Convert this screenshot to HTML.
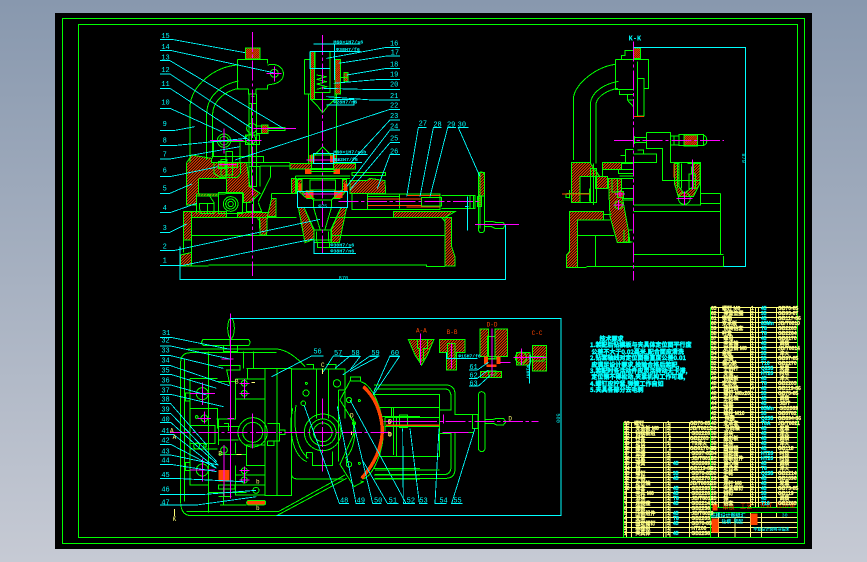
<!DOCTYPE html>
<html lang="zh"><head><meta charset="utf-8"><title>CAD</title>
<style>
html,body{margin:0;padding:0;width:867px;height:562px;overflow:hidden;background:linear-gradient(#8898ae,#c6cad4)}
svg{position:absolute;left:0;top:0}
svg *{shape-rendering:crispEdges}
.g,.g *{fill:none;stroke:#0f0;stroke-width:3}
.c,.c *{fill:none;stroke:#0ff;stroke-width:2.6}
.m,.m *{fill:none;stroke:#f0f;stroke-width:3;stroke-dasharray:60 8 10 8}
.ms,.ms *{fill:none;stroke:#f0f;stroke-width:3}
.r,.r *{fill:none;stroke:#f40;stroke-width:3}
.o,.o *{fill:#f40;stroke:none}
.h,.h *{fill:url(#hatch);stroke:#0f0;stroke-width:3}
.hd,.hd *{fill:url(#dense);stroke:#0f0;stroke-width:3}
.y,.y *{fill:none;stroke:#ff7;stroke-width:1}
text{font-family:"Liberation Mono","Noto Sans CJK SC",monospace;shape-rendering:auto}
.t{fill:#0ff;font-size:21px}
.ty{fill:#ff7;font-size:18px}
.to{fill:#f40;font-size:18px}
.col{position:absolute;font:bold 5px/5px "Liberation Sans","Noto Sans CJK SC",sans-serif;color:#ff8;white-space:pre;-webkit-text-stroke:.25px #ff8}
.cy{color:#0ff;-webkit-text-stroke:.25px #0ff}
.note{position:absolute;left:590px;top:336px;width:106px;font:bold 6px/6.4px "Noto Sans CJK SC",sans-serif;color:#0ff;-webkit-text-stroke:.45px #0ff;white-space:pre}
</style></head><body>
<svg width="867" height="562" viewBox="0 0 867 562" xmlns="http://www.w3.org/2000/svg">
<defs>
<pattern id="hatch" width="6" height="6" patternUnits="userSpaceOnUse" patternTransform="rotate(45)"><rect width="6" height="6" fill="#000"/><rect width="3" height="6" fill="#f40"/></pattern>
<pattern id="dense" width="4" height="4" patternUnits="userSpaceOnUse" patternTransform="rotate(45)"><rect width="4" height="4" fill="#200"/><rect width="3" height="4" fill="#f40"/></pattern>
</defs>
<rect x="55" y="13" width="757" height="536" fill="#000"/>
<rect x="62.5" y="18.5" width="742" height="525" fill="none" stroke="#0f0" stroke-width="1"/>
<rect x="78.5" y="24.5" width="719" height="513" fill="none" stroke="#0f0" stroke-width="1"/>

<!-- FRONT VIEW -->
<g transform="translate(150,20) scale(.33333)">
<g class="h">
<path d="M110,428 L125,405 L185,415 V428 H290 L300,500 L330,520 L300,548 H280 V520 H205 V528 H140 V555 H110Z"/>
<path d="M100,575 H145 L125,592 V660 H100Z"/>
<path d="M92,705 L125,697 V738 H92Z"/>
<path d="M125,575 H230 V592 H125Z M262,578 H355 V592 H262Z"/>
<path d="M328,592 H352 L350,645 H330Z"/>
<path d="M365,535 H378 V590 H352Z"/>
<path d="M420,430 H484 V447 H420Z M550,430 H617 V447 H550Z"/>
<path d="M445,562 H462 L492,628 V658 L465,668 Z"/>
<path d="M590,562 H573 L543,628 V668 H568Z"/>
<path d="M600,482 H650 L660,475 L705,482 L707,520 H600Z"/>
<path d="M425,475 H440 V520 H425Z"/>
<path d="M730,575 H915 L885,592 H730Z"/>
<path d="M885,592 H905 V680 L915,710 V738 H885Z"/>
<path d="M192,440 V460 L210,472 H262 L272,460 V428 H192Z"/>
<path d="M442,478 H456 V515 L490,535 H470 L442,510Z M590,478 H578 V515 L550,535 H570 L590,510Z"/>
</g>
<rect x="145" y="475" width="85" height="47" fill="#000" stroke="#0f0" stroke-width="3" rx="6"/>
<g class="hd"><path d="M286,84 H330 V117 H286Z"/><path d="M334,315 H354 V340 H334Z"/><path d="M582,157 H594 V185 H582Z"/><path d="M492,95 H495 V145 H492Z"/><path d="M555,118 H572 V222 H555Z"/><path d="M482,95 H494 V238 H482Z"/><path d="M206,428 H262 V442 H206Z"/><path d="M985,458 H1003 V528 H985Z" style="fill:url(#hatch)"/><path d="M982,530 H994 V560 H982Z"/></g>
<g class="o"><rect x="478" y="405" width="16" height="22"/><rect x="540" y="405" width="16" height="22"/><rect x="465" y="447" width="20" height="15"/><rect x="550" y="447" width="20" height="15"/><rect x="466" y="512" width="25" height="22"/><rect x="552" y="512" width="25" height="22"/><rect x="445" y="490" width="10" height="25"/><rect x="582" y="490" width="10" height="25"/></g>

<g class="g">
<path d="M120,428 V260 C122,200 190,140 262,135"/>
<path d="M170,420 V280 C172,230 210,195 265,183"/>
<path d="M188,415 V280 C190,245 220,215 265,205"/>
<path d="M262,118 H352 V130 M262,118 V207 H296 M318,207 H352 V195"/>
<path d="M352,135 C385,128 402,145 400,165 C398,185 380,192 352,195"/>
<circle cx="373" cy="160" r="12"/>
<path d="M296,207 V222 H318 V207 M297,222 V500 H320 V222 M304,230 H314 M296,250 H320 M304,250 V500"/>
<circle cx="305" cy="325" r="15"/><circle cx="302" cy="358" r="15"/><rect x="286" y="345" width="43" height="28"/>
<path d="M354,322 H405 V332 H354 M318,318 H334 V340 H318"/>
<circle cx="222" cy="362" r="20"/><circle cx="222" cy="362" r="13"/>
<path d="M190,362 V410 M270,368 V428 M185,365 H290 M185,410 H270"/>
<rect x="228" y="395" width="20" height="70"/><rect x="213" y="418" width="18" height="50"/><path d="M205,425 H225 V445 H205Z"/>
<path d="M270,410 H340 V428 M270,428 H420 M330,438 H420 M330,438 L362,438 V470 L325,545 M297,440 H330 V500"/>
<rect x="206" y="518" width="71" height="62"/><circle cx="242" cy="552" r="22"/><circle cx="242" cy="552" r="15"/><circle cx="242" cy="552" r="8"/>
<path d="M140,520 V580 M142,522 H175 L192,548 V580 H150 L148,550 H190 M172,550 V580"/>
<path d="M290,575 V548 L305,545 M325,548 L335,575 H288 M310,530 V575"/>
<path d="M125,592 H320 L330,603 V645 M125,646 H460 M100,660 H125 M100,660 V697 M125,660 V697"/>
<path d="M355,592 H440 M365,520 H425 M365,520 V535 M125,738 H175 M175,735 H830 V740 H885"/>
<path d="M540,592 H875 L885,605 M545,646 H885"/>
<!-- center spindle -->
<path d="M463,118 V222 H482 V238 L500,255 L518,278 L536,255 L555,238 V222 H572 M463,118 H482 M490,145 H540 V218 H493 V145 M493,95 H540 V145 M480,238 H555"/>
<path d="M500,165 L530,170 L500,178 L530,185 L500,192 L530,200 L500,208"/>
<path d="M475,222 V430 M560,222 V430 M572,172 H595"/>
<path d="M492,407 L518,380 L545,407 M484,405 H550 V445 H484Z M484,430 H550"/>
<path d="M436,468 H600 M480,448 H556 M480,455 H556 M436,468 V520 M606,458 H707 V466 H606Z"/>
<path d="M442,475 H600 M480,480 H556 V510 H480Z M470,510 L490,540 H545 L575,510"/>
<path d="M462,562 L490,628 M573,562 L545,628 M490,540 V560 L510,628 M545,540 V560 L525,628 M470,562 H570"/>
<path d="M492,630 H544 V668 H492Z M500,635 V665 M535,635 V665"/>
<path d="M492,660 H545 M502,665 V683 H538 V665"/>
<rect x="606" y="520" width="46" height="48"/>
<path d="M652,522 H870 V568 H652 M652,530 H750 M748,523 V565 M815,533 H875 V558 H815Z M875,526 H975 V565 H875 M960,526 V565 M970,526 V565"/>
<path d="M985,475 Q985,456 994,456 Q1004,456 1004,475 V625 Q1004,638 994,638 Q985,638 985,625Z M990,460 V625"/>
<path d="M1004,605 H1030 L1040,608 H1060 L1065,615 L1060,625 H1035 L1025,620 H1004"/>
</g>
<g class="r"><path d="M652,537 H815 M652,557 H815 M770,527 H870 M770,561 H870"/></g>
<g class="m"><path d="M307,36 V768"/><path d="M517,45 V700"/><path d="M565,545 H985"/></g>
<g class="ms"><path d="M350,160 H395 M373,140 V185 M310,325 H438 M290,362 H335 M180,362 H280 M222,325 V400 M470,420 H570 M460,522 H575 M975,613 H1107 M205,433 H260"/></g>
<g class="c">
<path d="M30,58 H65 L285,98 M30,92 H65 L370,158 M30,122 H60 L400,325 M30,162 H60 L305,325 M30,205 H60 L300,362 M30,265 H60 L215,335 M30,332 H70 L135,320 M30,377 H70 L290,355 M30,417 H60 L270,380 M30,470 H60 L205,440 M30,520 H60 L125,492 M30,578 H60 L140,550 M30,637 H60 L110,612 M30,692 H70 L510,598 M30,737 H95 L490,657"/>
<path d="M750,82 H710 L530,115 M750,108 H710 L565,130 M750,145 H710 L590,165 M750,178 H690 L550,190 M750,208 H640 L520,205 M750,240 H665 L530,230 M750,268 H720 L255,420 M750,300 H720 L600,430 M750,330 H720 L590,500 M750,368 H720 L600,510 M750,404 H720 L682,505"/>
<path d="M830,323 H805 L770,530 M875,323 H850 L810,530 M918,323 H893 L840,530 M955,323 H925 L990,470"/>
<path d="M490,72 H553 V180 M480,95 H553 M480,95 V145 H540 M548,72 H632 M553,95 H632 M540,238 H612 V255 H530 M490,400 H550 V430 H490Z M550,403 H652 M550,428 H636"/>
<path d="M442,515 H592 V563 H442Z M492,660 V700 H618 M540,683 H605 M953,530 V632 M945,560 H955"/>
<path d="M90,680 V778 H1066 V615"/>
</g>
<g class="t">
<text x="34" y="54">15</text><text x="34" y="87">14</text><text x="34" y="118">13</text><text x="34" y="156">12</text><text x="34" y="198">11</text><text x="34" y="254">10</text><text x="38" y="318">9</text><text x="38" y="368">8</text><text x="38" y="410">7</text><text x="38" y="458">6</text><text x="38" y="512">5</text><text x="38" y="570">4</text><text x="38" y="630">3</text><text x="38" y="685">2</text><text x="38" y="728">1</text>
<text x="720" y="77">16</text><text x="722" y="103">17</text><text x="720" y="140">18</text><text x="720" y="170">19</text><text x="720" y="200">20</text><text x="720" y="234">21</text><text x="720" y="263">22</text><text x="720" y="294">23</text><text x="720" y="325">24</text><text x="720" y="362">25</text><text x="720" y="400">26</text>
<text x="806" y="317">27</text><text x="850" y="320">28</text><text x="891" y="320">29</text><text x="923" y="320">30</text>
<text x="566" y="778" font-size="16">870</text><text x="505" y="562" font-size="15">Φ75</text>
<text x="550" y="70" font-size="15" font-weight="bold">M60×1H7/s6</text><text x="558" y="93" font-size="15" font-weight="bold">Φ38H7/f6</text><text x="550" y="250" font-size="15" font-weight="bold">Φ28H7/n6</text>
<text x="550" y="400" font-size="15" font-weight="bold">M60×1H7/s6b</text><text x="552" y="423" font-size="15" font-weight="bold">Φ32H7/f6</text>
<text x="541" y="680" font-size="15" font-weight="bold">Φ30H7/s6</text><text x="541" y="697" font-size="15" font-weight="bold">Φ38H7/n6</text>
</g>
</g>

<!-- SIDE VIEW -->
<g transform="translate(530,20) scale(.33333)">
<g class="h">
<path d="M125,428 H180 L210,470 H150 V548 H125Z"/>
<path d="M118,575 H220 V600 H142 V742 H110 V705 L118,695Z"/>
<path d="M217,428 H275 V448 H217Z"/>
<path d="M197,470 H232 V505 H197Z"/>
<path d="M235,476 H275 V520 L295,630 L300,668 H262 L240,590Z"/>
<path d="M433,430 H447 V500 L462,520 L490,500 V430 H510 V490 L490,530 H445 L433,490Z"/>
</g>
<g class="hd"><path d="M310,84 H332 V116 H310Z"/><path d="M462,345 H502 V378 H462Z"/><path d="M262,515 H280 V532 H262Z"/></g>
<g class="g">
<path d="M130,420 V235 C135,190 200,140 256,133 M182,430 V245 C190,210 230,190 266,184 M198,430 V250 C205,225 235,210 264,205"/>
<path d="M256,118 V208 H310 M256,118 H355 V205 H342 M322,125 V288 H342 V175 H322 M268,212 V224 H310 M274,118 V106 H285 V92 H310 M292,224 V240 H310 M292,240 L310,260"/>
<path d="M313,348 V372 M313,352 H349 M313,368 H349 M349,337 H422 V427 H512 V555 H310 M349,337 V385 H397 V482 H512 M422,348 H447 M422,375 H447 M447,343 H520 V377 H447Z M432,348 V375 M520,345 Q532,350 530,361 Q532,372 520,377"/>
<path d="M286,388 H310 M286,388 V428 H380 V402 H310 M322,390 H340 V402 M272,407 H286 V428 M270,428 H310"/>
<path d="M118,575 V695 M142,646 H252 M196,646 V740 M110,742 H170 M170,739 H580 V708 M310,703 H580 M572,520 V703 M512,520 H572 M512,550 H572 M310,574 H572 M142,600 H240"/>
<rect x="182" y="445" width="18" height="103"/><path d="M178,505 V545 M190,430 V555 M150,470 V548 H180"/>
<path d="M217,428 V470 M265,448 V460 H310 M275,430 H310 M275,448 H310 M268,468 H310 M268,475 H310 M275,505 H310 M278,535 H310 M278,540 H310 M246,476 V516 H262 V476 M295,630 H308 M282,630 V666 H308 M295,630 V666 M222,583 H245"/>
<path d="M443,430 V505 M455,430 V505 M472,430 H507 M477,462 H497 V505 H477Z M485,440 V462"/>
<circle cx="463" cy="535" r="18"/><circle cx="266" cy="555" r="12"/>
<path d="M110,520 H180 M118,510 V536 M108,520 V532 H120"/>
</g>
<g class="r"><path d="M96,522 H180 M312,290 H342 M432,430 V472"/></g>
<g class="m"><path d="M310,65 V782"/><path d="M252,361 H582"/></g>
<g class="ms"><path d="M440,535 H487 M463,515 V555 M487,418 V510 M250,555 H282 M266,540 V570 M255,522 H285 M270,512 V532"/></g>
<g class="c"><path d="M310,82 H646 V739 H580"/></g>
<text class="t" x="296" y="62" font-weight="bold">K-K</text>
<g class="t"><text transform="translate(636,400) rotate(90)" font-size="16">870</text></g>
</g>

<!-- PLAN VIEW -->
<g transform="translate(150,305) scale(.33333)">
<g class="g">
<ellipse cx="243" cy="70" rx="10" ry="30"/>
<path d="M240,100 V123 M160,103 H295 Q305,112 295,122 H160 Q150,112 160,103Z M220,122 V140 H262 V122"/>
<path d="M380,143 H122 Q92,143 92,172 V590 Q92,632 125,632 H380 L590,520 M112,132 H380 Q420,135 465,185 M104,160 V590 M110,620 H385 L585,510"/>
<path d="M175,140 V622 M280,140 V190 M310,140 V190 M120,220 V540 H175 M120,220 H202 M120,310 H202 V370 M120,432 H202 M120,362 H195 V415 H120"/>
<path d="M256,222 H345 M256,222 V282 H345 M290,190 H345 M345,190 V572 H425 V190 H345 M381,190 V572"/>
<path d="M292,192 V222 M200,230 H256 V342 H200 M205,365 H266 M205,405 H266 M205,342 V420 M256,412 V445 M205,448 H290 V482 H345 M256,482 V570 H345 M256,540 H345 M256,510 H345 M290,448 V420 H345"/>
<circle cx="308" cy="382" r="30"/><circle cx="308" cy="382" r="44"/>
<path d="M352,355 H388 V408 H352 M388,375 H405 V388 H388 M352,408 V422 H372 V408"/>
<circle cx="157" cy="266" r="18"/><circle cx="157" cy="495" r="18"/><circle cx="163" cy="340" r="10"/><circle cx="140" cy="423" r="9"/><circle cx="165" cy="423" r="4"/><circle cx="140" cy="336" r="4"/>
<circle cx="283" cy="235" r="9"/><circle cx="283" cy="265" r="9"/><circle cx="283" cy="497" r="9"/><circle cx="283" cy="525" r="9"/><circle cx="318" cy="556" r="9"/><circle cx="222" cy="435" r="10"/>
<path d="M106,264 H120 V288 H106Z M106,472 H120 V496 H106Z M205,182 H270 V195 H230 L240,240 M222,355 H235 V378"/>
<path d="M205,540 H255 V552 H205Z M205,575 H245 M210,600 H290 M175,562 H290 M220,545 V600"/>
<!-- right body -->
<path d="M425,192 H585 V340 M500,192 V340 M535,192 V340 M470,178 H490 V192 M530,178 H558 V192"/>
<circle cx="518" cy="382" r="55"/><circle cx="518" cy="382" r="40"/><circle cx="518" cy="382" r="28"/>
<path d="M428,310 C415,370 425,450 470,470 M610,340 C622,385 610,440 585,460 M438,300 C430,350 435,430 475,460 M487,442 V482 H548 V440 M487,442 H470 V460 M425,490 V512 Q428,522 445,522 H580"/>
<circle cx="468" cy="264" r="9"/><circle cx="460" cy="295" r="7"/><circle cx="561" cy="235" r="11"/><circle cx="469" cy="235" r="3"/>
<path d="M570,285 L600,228 H632 V216 H602 V228 M570,285 L610,350 V390 L570,478 L612,545 L640,530 L632,528 M632,230 C670,240 700,320 700,380 C700,440 670,510 640,522"/>
<path d="M565,255 V470 M585,255 H565 M590,475 V460"/>
<circle cx="597" cy="285" r="8"/><circle cx="612" cy="355" r="5"/><circle cx="597" cy="478" r="8"/><circle cx="628" cy="287" r="3"/><circle cx="628" cy="475" r="3"/>
<path d="M672,240 H810 M672,252 H810 M672,268 H810 M690,308 H810 M690,335 H810 M690,425 V455 M690,455 H810 M672,490 H810 M672,510 H810 M672,522 H810 M730,308 V450 M740,335 V450"/>
<rect x="748" y="330" width="25" height="38"/>
</g>
<path d="M640,245 Q690,290 697,370 Q697,450 635,520" fill="none" stroke="#f40" stroke-width="10"/>
<rect x="205" y="495" width="33" height="35" fill="#f40"/>
<rect x="290" y="586" width="57" height="14" rx="6" fill="#f40" stroke="#0f0" stroke-width="3"/>
<g class="m"><path d="M60,382 H725"/><path d="M518,280 V500"/></g>
<g class="ms"><path d="M241,25 V580 M307,325 V430 M157,232 V300 M157,460 V530 M120,266 H195 M120,495 H195 M143,340 H183 M163,320 V355 M222,420 V575 M268,235 H298 M268,265 H298 M268,497 H298 M268,525 H298 M283,222 V280 M283,485 V535 M215,162 H250 M232,340 H252 M700,350 H810"/></g>
<g class="c">
<path d="M30,97 H62 L240,133 M30,123 H62 L240,162 M30,152 H62 L220,190 M30,182 H62 L238,242 M30,208 H62 L200,250 M30,240 H62 L170,270 M30,268 H62 L220,305 M30,296 H62 L170,420 M30,325 H62 L200,470 M30,352 H62 L205,480 M30,388 H70 L200,490 M30,418 H62 L200,490 M30,450 H62 L205,480 M30,478 H62 L200,500 M30,520 H70 L280,530 M30,568 H165 L318,556 M30,600 H140 L320,575"/>
<path d="M240,40 H810 M380,631 H810"/>
<path d="M520,153 H485 L365,215 M578,153 H550 L520,200 M628,153 H600 L555,190 M688,153 H660 L578,210 M748,153 H720 L670,265"/>
<path d="M597,595 H568 L462,300 M645,595 H618 L562,305 M695,595 H668 L612,360 M745,595 H712 L640,470 M795,595 H768 L600,285"/>
</g>
<g class="t">
<text x="36" y="90">31</text><text x="34" y="112">32</text><text x="34" y="143">33</text><text x="34" y="172">34</text><text x="34" y="202">35</text><text x="34" y="233">36</text><text x="34" y="262">37</text><text x="34" y="290">38</text><text x="34" y="320">39</text><text x="34" y="350">40</text><text x="34" y="384">41</text><text x="34" y="413">42</text><text x="34" y="445">43</text><text x="34" y="473">44</text><text x="34" y="516">45</text><text x="34" y="560">46</text><text x="34" y="598">47</text>
<text x="490" y="146">56</text><text x="552" y="150">57</text><text x="604" y="150">58</text><text x="664" y="150">59</text><text x="722" y="150">60</text>
<text x="570" y="592">48</text><text x="620" y="592">49</text><text x="672" y="592">50</text><text x="716" y="592">51</text><text x="770" y="592">52</text>
</g>
<g class="ty">
<text x="68" y="648">K</text><text x="60" y="382">A</text><text x="68" y="402">A</text><text x="255" y="235">B</text><text x="205" y="452">B</text><text x="318" y="535">b</text><text x="318" y="615">b</text><text x="513" y="186">C</text><text x="600" y="337">D</text><text x="715" y="394">D</text><text x="715" y="355">D</text>
</g>
<path d="M73,612 V635 M260,448 H275 M305,232 H315 M517,190 V207 M605,380 V390" stroke="#ff7" stroke-width="3" fill="none"/>
</g>

<!-- RIGHT PLAN + SECTIONS -->
<g transform="translate(340,315) scale(.33333)">
<g class="h">
<path d="M205,73 H282 L262,120 L245,150 L225,120Z"/>
<path d="M298,73 H375 V112 H350 V165 H320 V112 H298Z"/>
<path d="M420,42 H445 V125 H420Z"/>
<path d="M465,42 H502 V125 H465Z"/>
<path d="M422,170 H485 V188 H422Z"/>
<path d="M578,92 H620 V168 H578 Z"/>
<path d="M530,112 H570 V150 H530Z"/>
</g>
<g class="g">
<path d="M105,210 H320 Q345,212 345,238 V298 H400 M105,490 H320 Q345,488 345,462 V352 H400 M105,222 H318 Q333,225 333,245 V285 H298 M105,478 H318 Q333,475 333,455 V355 H298"/>
<path d="M105,238 H298 V425 H155 M155,278 H298 M135,308 H298 M135,335 H298 M135,308 V350 M170,335 V425 M155,278 V308 M105,465 H298"/>
<rect x="178" y="300" width="25" height="38"/>
<rect x="398" y="298" width="16" height="42"/>
<rect x="415" y="230" width="20" height="180" rx="10"/>
<path d="M435,313 H460 L470,310 H490 L498,320 L490,330 H470 L460,325 H435"/>
<path d="M232,73 H262 V100 H250 V135 H238 V100 H232Z M322,85 H345 V130 H322Z M443,65 H465 V130 H443Z M440,125 H470 V132 H440Z M445,168 H468 V180 H445Z"/>
<circle cx="543" cy="128" r="17"/><path d="M570,125 H612 V138 H570 M572,118 V145"/>
</g>
<g class="o"><rect x="432" y="125" width="12" height="22"/><rect x="470" y="125" width="12" height="22"/><rect x="440" y="148" width="30" height="8"/><rect x="138" y="328" width="160" height="5"/></g>
<g class="ms"><path d="M241,55 V150 M335,85 V160 M456,40 V185 M545,100 V150 M520,128 H620 M310,298 V325 M480,142 H512"/></g>
<g class="m"><path d="M145,320 H595"/></g>
<path d="M308,352 H385" stroke="#f0f" stroke-width="3" fill="none"/>
<g class="c">
<path d="M0,125 H60 L30,165 M90,125 H115 L30,170 M150,125 H178 L100,240 M215,565 H190 L188,340 M262,565 H238 L210,340 M320,565 H285 L297,340 M368,565 H335 L405,340"/>
<path d="M387,165 H412 L445,142 M387,190 H412 L445,165 M387,213 H415 L450,182"/>
<path d="M320,112 V130 H412"/>
<path d="M568,145 V205 M570,118 V145"/>
<path d="M0,602 H663 V10 H0"/>
</g>
<g class="t">
<text x="238" y="562">53</text><text x="298" y="562">54</text><text x="340" y="562">55</text>
<text x="388" y="162">61</text><text x="388" y="188">62</text><text x="388" y="212">63</text>
<text x="355" y="128" font-size="14" font-weight="bold">Φ15H7/f6</text>
<text transform="translate(560,150) rotate(90)" font-size="14" font-weight="bold">Φ10H7</text>
<text transform="translate(650,295) rotate(90)" font-size="16">500</text>
</g>
<g class="to"><text x="228" y="52">A-A</text><text x="320" y="57">B-B</text><text x="440" y="35">D-D</text><text x="575" y="60">C-C</text></g>
<g class="ty"><text x="143" y="327">b</text><text x="505" y="316">D</text><text x="143" y="363">b</text></g>
</g>

<!-- TABLE -->
<g transform="translate(580,300) scale(.33333)">
<g style="stroke:#ff7;stroke-width:3;fill:none">
<path d="M391,22H652M391,38H652M391,53H652M391,68H652M391,83H652M391,98H652M391,113H652M391,128H652M391,143H652M391,158H652M391,173H652M391,188H652M391,203H652M391,218H652M391,233H652M391,248H652M391,263H652M391,278H652M391,293H652M391,308H652M391,323H652M391,338H652M391,353H652M391,368H652M391,383H652M391,398H652M391,413H652M391,428H652M391,443H652M391,458H652M391,473H652M391,488H652M391,503H652M391,518H652M391,533H652M391,548H652M391,563H652M391,578H652M391,593H652M391,608H652"/>
<path d="M130,367H391M130,382H391M130,397H391M130,412H391M130,427H391M130,442H391M130,457H391M130,472H391M130,487H391M130,502H391M130,517H391M130,532H391M130,547H391M130,562H391M130,577H391M130,592H391M130,607H391M130,622H391M130,637H391M130,652H391M130,667H391M130,682H391M130,697H391"/>
<path d="M391,653H652M391,668H652M391,683H652M391,697H652"/>
<path d="M415,22V622M512,22V622M527,22V622M535,22V622M590,22V622M140,367V712M155,367V712M250,367V712M258,367V712M270,367V712M328,367V712"/>
<path d="M415,637V712M465,652V712M512,637V712M545,637V712M590,637V652"/>
</g>
<g style="stroke:#0f0;stroke-width:3;fill:none"><path d="M391,22V712M652,0V712M130,367V712M391,622H652M391,637H652M0,712H652"/></g>
<g class="o"><rect x="395" y="655" width="20" height="42"/><rect x="512" y="640" width="20" height="35"/><rect x="397" y="612" width="16" height="20"/></g>
<g><text x="428" y="628" class="to">审核</text><text x="480" y="625" class="to">工艺</text><text x="540" y="622" class="to">件数</text><text x="590" y="622" class="to">比例</text><text x="628" y="622" class="to">重</text></g>
<g>
<text x="392" y="651" class="t" style="font-size:15px;font-weight:bold">钻模设计图纸汇</text>
<text x="425" y="669" class="t" style="font-size:14px;font-weight:bold">钻模 装配</text>
<text x="520" y="691" class="t" style="font-size:12px;font-weight:bold">毕业设计说明书钻床</text>
<text x="605" y="650" class="t" style="font-size:15px">30</text>
</g>
</g>
</svg>

<div class="col" style="left:711px;top:307px">63
62
61
60
59
58
57
56
55
54
53
52
51
50
49
48
47
46
45
44
43
42
41
40
39
38
37
36
35
34
33
32
31
30
29
28
27
26
25
24</div>
<div class="col" style="left:722px;top:307px">螺钉 M6
 弹簧垫圈
锥销
支承板
 快换钻套
衬套
 螺母
 夹紧轴
 定位销 M8
盖板
 垫圈
偏心轮
 手柄杆
 支架
 钻模板
定位块
 圆柱销
 螺钉 M8x20
 手轮轴
 压板
 弹簧
 螺栓 M10
  挡圈
 支承套
  导向轴
 滑块
 扇形板
 压块
 圆锥销
 固定座
 底板组件
 偏心轴
 定位套
 手轮
 键
 连杆 M6
 夹紧螺钉
 销钉
 轴
 钻套</div>
<div class="col" style="left:751px;top:307px">1
2
1
1
1
1
2
1
1
2
1
1
1
1
1
2
4
1
1
1
1
2
1
1
1
1
1
1
1
2
1
1
1
1
1
1
2
1
1
1</div>
<div class="col cy" style="left:761px;top:307px">45
35
45
65Mn
T8
T8
45
45
45
35
35
T10
Q235
HT20
45
T8
45
35
45
45
65Mn
35
Q235
T8A
45
45
45
45
45
HT20
HT20
45
T8
Q235
45
45
45
35
45
T10</div>
<div class="col" style="left:778px;top:307px">GB70-85
GB93-87
GB117-86
JB/T8010
GB2263
GB2264
GB6170
 调质
JB/T8014
 淬火
GB97-85
GB2270
 发黑
 时效
 淬火
GB2203
GB119-86
GB70-85
 调质
 JB/T
 GB2089
GB5782
GB894-86
JB/T8021
 发黑
 淬火
 调质
 淬火
GB118
 时效
 时效
 调质
 淬火
GB2214
GB1096
 发黑
GB73-85
GB119
 调质
GB2263</div>
<div class="col" style="left:624px;top:422px">23
22
21
20
19
18
17
16
15
14
13
12
11
10
9
8
7
6
5
4
3
2
1</div>
<div class="col" style="left:634px;top:422px">螺钉
 支承板 M8
 钻模板组
 衬套
 定位
 螺母
 垫圈
 压紧
 弹簧
 销
 螺钉
 手柄
 定位轴
 锥套
 夹具 M6
 滑块
 连接座
 底板
 压板组件
 支架
 固定螺钉
 基座组
 夹具体</div>
<div class="col" style="left:667px;top:422px">1
2
1
 2
1
 1
1
2
1
1
1
1
1
1
1
1
1
1
1
1
2
1
1</div>
<div class="col cy" style="left:673px;top:422px">

 
 

 
 
 
45
 
35
45
 
45
45
T8
45
 
45
T8
45
 
45</div>
<div class="col" style="left:690px;top:422px">GB70-85
JB/T8012
 GB2226
GB2263
 T8淬火
GB6170-86
 GB97-85
 JB/T8018
 GB2089
GB119-86
 GB70-85
 GB2270
JB/T8032
 GB2263
 GB2226
 JB/T8019
 GB2214
 GB2236
 JB/T8029
 GB2203
 GB70-85
 HT200
 GB2258</div>
<div class="note">       技术要求
1.装配后钻模板与夹具体定位面平行度
 公差不大于0.02毫米,配合面应清洗
2.钻套轴线对定位面垂直度公差0.01
 应满足设计要求,检验合格后装配,
3.装配时各活动件应灵活转动无卡滞,
 定位销不得松动,夹紧机构工作可靠,
4.螺钉应拧紧,弹簧工作自如
5.夹具各部分去毛刺</div>
</body></html>
